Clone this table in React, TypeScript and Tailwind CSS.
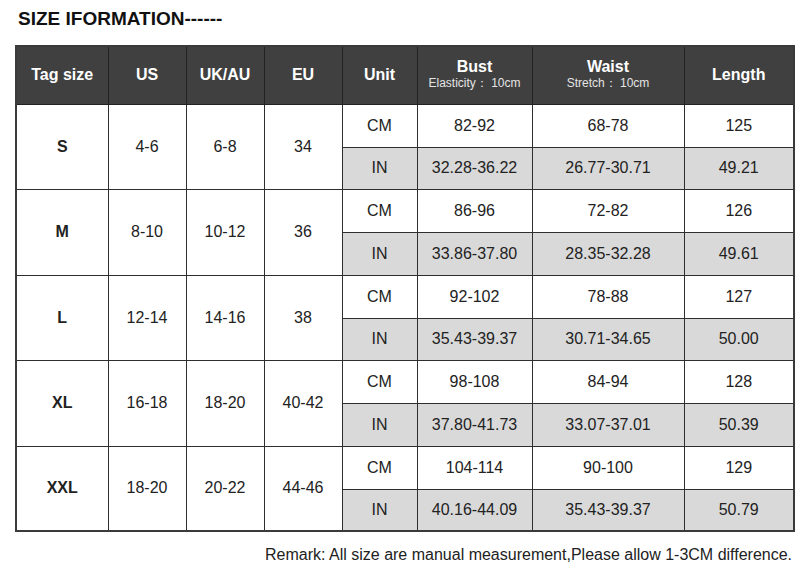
const ROWS = [
  { tag: "S", us: "4-6", uk: "6-8", eu: "34", cm: ["82-92", "68-78", "125"], inch: ["32.28-36.22", "26.77-30.71", "49.21"] },
  { tag: "M", us: "8-10", uk: "10-12", eu: "36", cm: ["86-96", "72-82", "126"], inch: ["33.86-37.80", "28.35-32.28", "49.61"] },
  { tag: "L", us: "12-14", uk: "14-16", eu: "38", cm: ["92-102", "78-88", "127"], inch: ["35.43-39.37", "30.71-34.65", "50.00"] },
  { tag: "XL", us: "16-18", uk: "18-20", eu: "40-42", cm: ["98-108", "84-94", "128"], inch: ["37.80-41.73", "33.07-37.01", "50.39"] },
  { tag: "XXL", us: "18-20", uk: "20-22", eu: "44-46", cm: ["104-114", "90-100", "129"], inch: ["40.16-44.09", "35.43-39.37", "50.79"] },
];

const WIDTHS = ["w-[92px]", "w-[78px]", "w-[78px]", "w-[78px]", "w-[75px]", "w-[115px]", "w-[152px]", "w-[110px]"];

export default function App() {
  return (
    <div className="w-[809px] h-[578px] bg-white font-['Liberation_Sans',Arial,sans-serif] text-[#222] relative">
      <h1 className="pt-[9px] pl-[18px] text-[19px] font-bold leading-[20px] text-[#111]">SIZE IFORMATION------</h1>

      <table className="ml-[15px] mt-[16px] w-[778px] border-collapse table-fixed text-center text-[16px] border-2 border-[#3a3a3a]">
        <colgroup>
          {WIDTHS.map((w, i) => (
            <col key={i} className={w} />
          ))}
        </colgroup>
        <thead>
          <tr className="h-[58px] bg-[#404040] text-white font-bold">
            <th className="border border-[#222]">Tag size</th>
            <th className="border border-[#222]">US</th>
            <th className="border border-[#222]">UK/AU</th>
            <th className="border border-[#222]">EU</th>
            <th className="border border-[#222]">Unit</th>
            <th className="border border-[#222] leading-[17px]">
              <div>Bust</div>
              <div className="text-[12px] font-normal text-[#e4e4e4]">Elasticity： 10cm</div>
            </th>
            <th className="border border-[#222] leading-[17px]">
              <div>Waist</div>
              <div className="text-[12px] font-normal text-[#e4e4e4]">Stretch： 10cm</div>
            </th>
            <th className="border border-[#222]">Length</th>
          </tr>
        </thead>
        <tbody>
          {ROWS.map((r, i) => (
            <SizeRows key={r.tag} row={r} tall={i % 2 === 1} />
          ))}
        </tbody>
      </table>

      <p className="mt-[11px] pl-[265px] text-[16px] text-[#222]">
        Remark: All size are manual measurement,Please allow 1-3CM difference.
      </p>
    </div>
  );
}

function SizeRows({ row, tall }: { row: (typeof ROWS)[number]; tall: boolean }) {
  const cell = "border border-[#2e2e2e]";
  return (
    <>
      <tr className="h-[43px] bg-white">
        <td rowSpan={2} className={cell + " font-bold"}>{row.tag}</td>
        <td rowSpan={2} className={cell}>{row.us}</td>
        <td rowSpan={2} className={cell}>{row.uk}</td>
        <td rowSpan={2} className={cell}>{row.eu}</td>
        <td className={cell}>CM</td>
        {row.cm.map((v, i) => (
          <td key={i} className={cell}>{v}</td>
        ))}
      </tr>
      <tr className={tall ? "h-[43px] bg-[#d9d9d9]" : "h-[42px] bg-[#d9d9d9]"}>
        <td className={cell}>IN</td>
        {row.inch.map((v, i) => (
          <td key={i} className={cell}>{v}</td>
        ))}
      </tr>
    </>
  );
}
